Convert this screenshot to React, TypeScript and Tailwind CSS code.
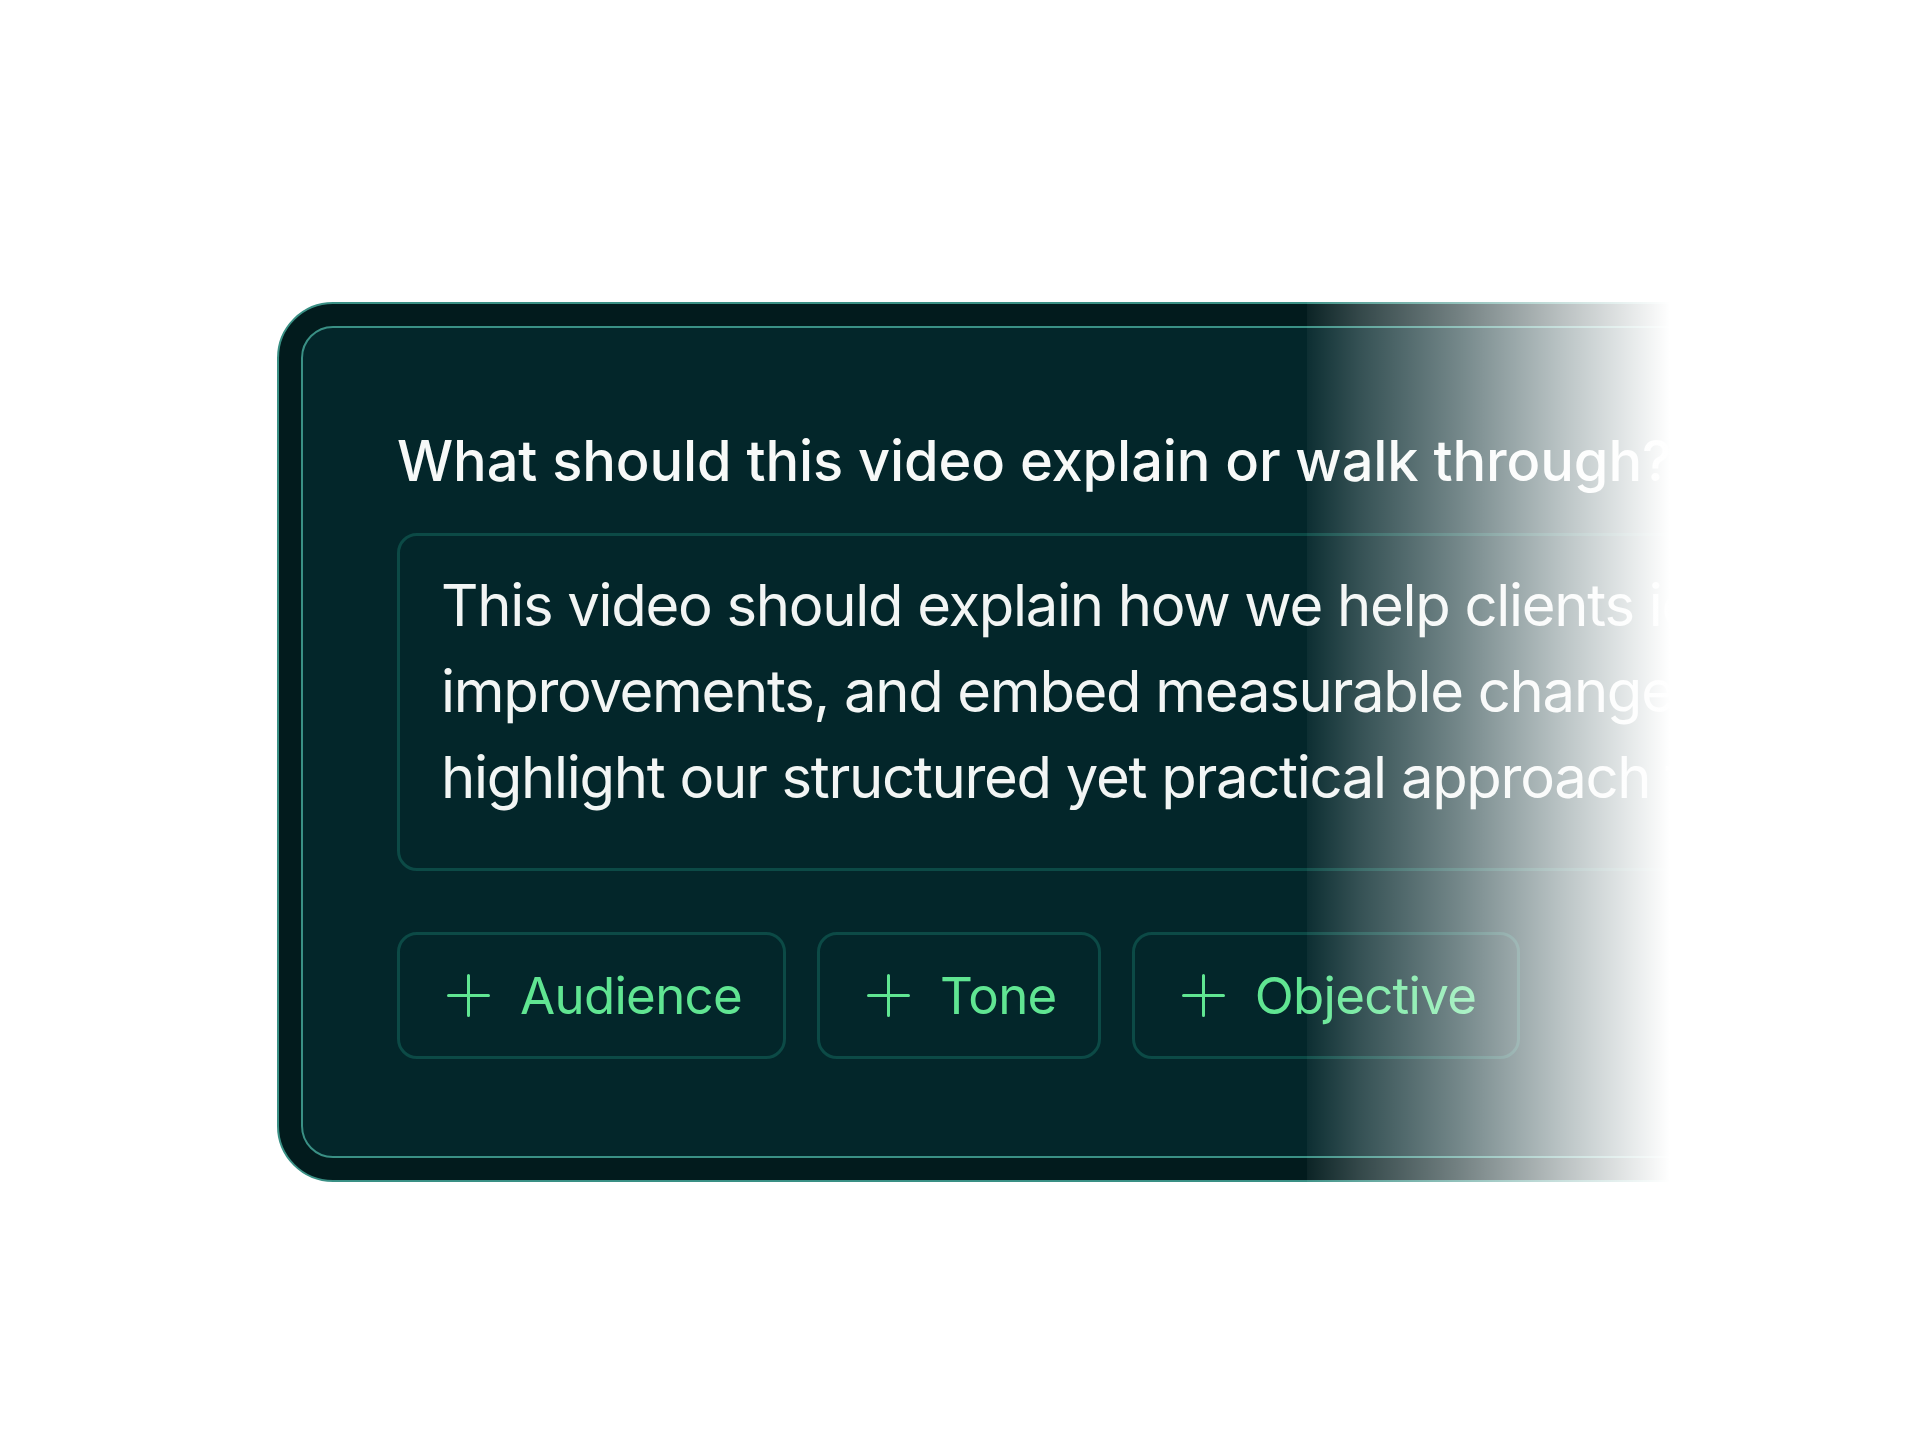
const chips = ["Audience", "Tone", "Objective"];

function PlusIcon() {
  return (
    <svg width="43" height="43" viewBox="0 0 43 43" fill="none" className="shrink-0">
      <path d="M21.5 1.5v40M1.5 21.5h40" stroke="currentColor" strokeWidth="3" strokeLinecap="round" />
    </svg>
  );
}

function Chip({ label }: { label: string }) {
  return (
    <button className="flex h-[127px] items-center gap-[30px] rounded-[20px] border-[3px] border-[#0c4a46] pl-[47px] pr-[41px] text-[#60e592]">
      <PlusIcon />
      <span className="text-[51px] leading-none tracking-[-0.7px]">{label}</span>
    </button>
  );
}

export default function App() {
  return (
    <div className="relative h-[1440px] w-full overflow-hidden bg-white font-[Inter,sans-serif]">
      <div className="pl-[277px] pt-[302px]">
        {/* outer frame */}
        <div className="h-[880px] w-[1640px] rounded-[56px] border-2 border-[#3a9085] bg-[#021b1d] p-[22px]">
          {/* inner card */}
          <div className="flex h-full flex-col rounded-[32px] border-2 border-[#3a9085] bg-[#03262a] pl-[94px] pt-[105px]">
            <h2 className="whitespace-nowrap text-[56px] font-medium leading-[56px] tracking-[-0.1px] text-[#f7f9f8]">
              What should this video explain or walk through?
            </h2>
            <div className="mt-[44px] h-[338px] overflow-hidden rounded-[20px] border-[3px] border-[#0c4a46] pb-[48px] pl-[41px] pt-[26px] text-[58px] leading-[86px] tracking-[-1.3px] text-[#f2f5f4]">
              <p className="whitespace-nowrap">This video should explain how we help clients identify priorities, map processes</p>
              <p className="whitespace-nowrap">improvements, and embed measurable change across every team. It should</p>
              <p className="whitespace-nowrap">highlight our structured yet practical approach to lasting transformation.</p>
            </div>
            <div className="mt-[61px] flex gap-[31px]">
              {chips.map((c) => (
                <Chip key={c} label={c} />
              ))}
            </div>
          </div>
        </div>
      </div>
      {/* fade out on the right */}
      <div className="absolute bottom-0 left-[1307px] right-0 top-0 bg-[linear-gradient(to_right,rgba(255,255,255,0.04),rgba(255,255,255,0.2)_53px,rgba(255,255,255,0.45)_153px,rgba(255,255,255,0.72)_253px,#ffffff_363px)]" />
    </div>
  );
}
